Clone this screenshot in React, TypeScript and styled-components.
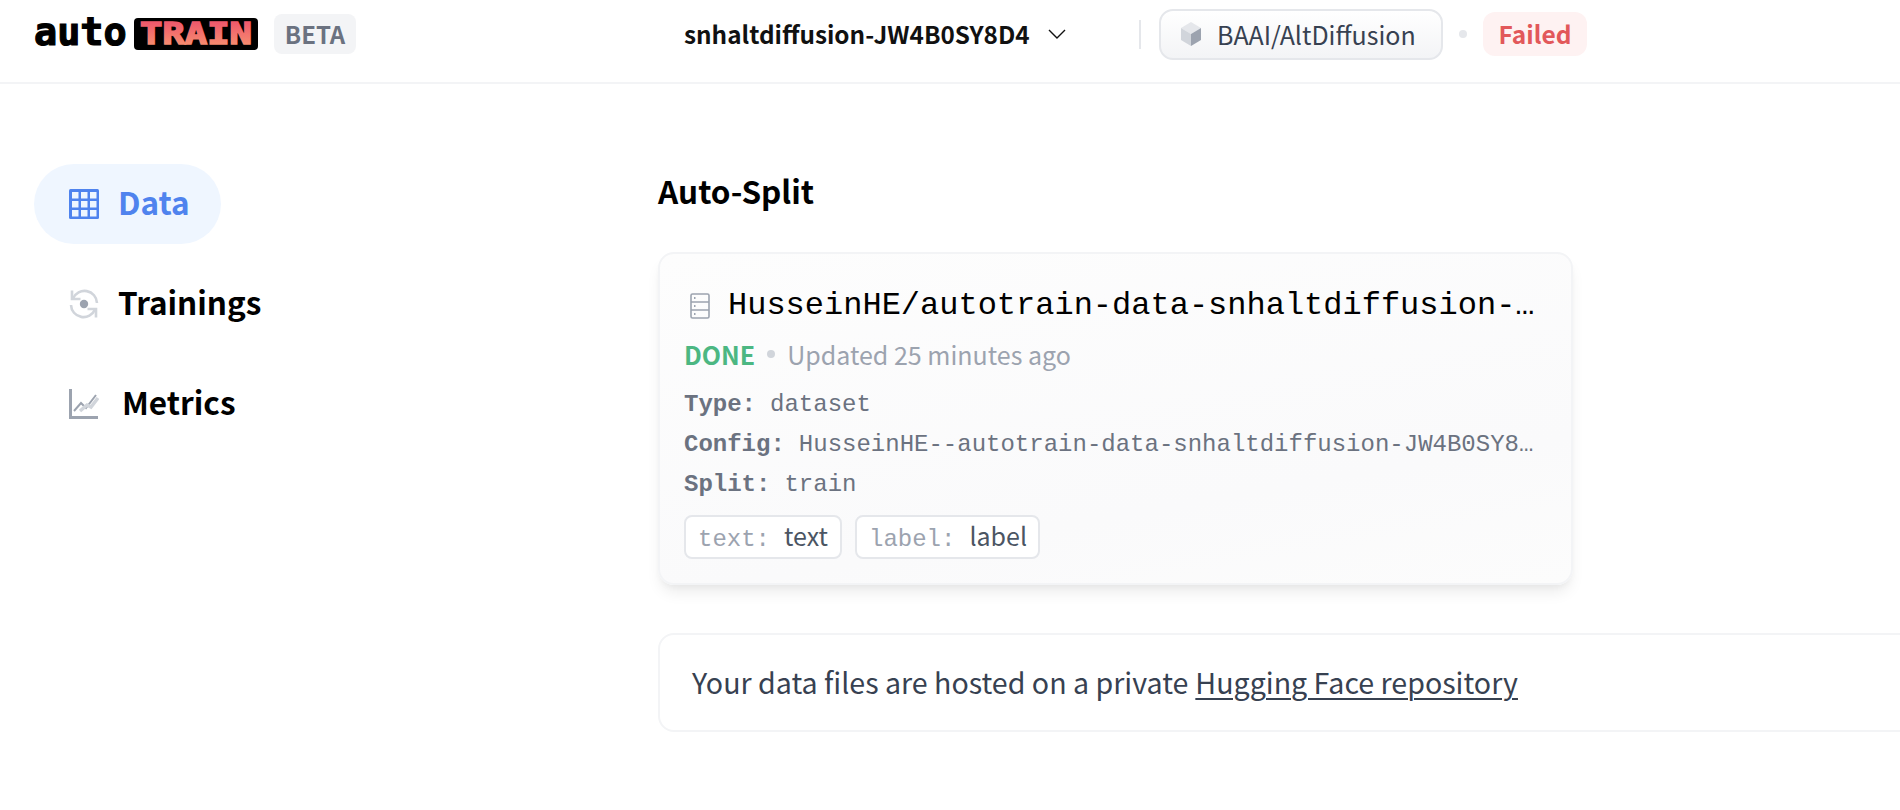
import React from "react";
import styled, { createGlobalStyle } from "styled-components";

const Global = createGlobalStyle`
  html, body { margin: 0; padding: 0; background: #fff; height: 810px; overflow: hidden; }
  body { font-family: "Noto Sans CJK SC", "Noto Sans", sans-serif; }
  * { box-sizing: border-box; }
`;
const SANS = `"Noto Sans CJK SC", "Noto Sans", sans-serif`;
const MONO = `"Liberation Mono", "DejaVu Sans Mono", monospace`;

const Header = styled.header`
  height: 84px; border-bottom: 2px solid #f3f4f6; display: flex; align-items: center; padding: 0 0 14px 34px;
`;
const Logo = styled.div`display: flex; align-items: center; width: 240px; gap: 8px;`;
const LogoAuto = styled.span`
  font-family: "DejaVu Sans Mono", monospace; font-weight: 700; font-size: 38.5px; line-height: 32px; color: #000; width: 92px; position: relative; top: -2px; -webkit-text-stroke: 1.2px #000;
`;
const LogoTrain = styled.svg`width: 124px; height: 32px; flex: none; display: block; overflow: visible;`;
const LogoTrainText = styled.text`
  font-family: "DejaVu Sans Mono", monospace; font-weight: 700; font-size: 30px;
`;
const Beta = styled.span`
  width: 82px; height: 40px; background: #f3f4f6; border-radius: 8px; color: #6b7280; font-size: 24px; font-weight: 600; display: flex; align-items: center; justify-content: center; line-height: 1;
`;
const ProjectName = styled.div`
  margin-left: 328px; font-size: 24.3px; font-weight: 600; color: #111; width: 347px; white-space: nowrap; line-height: 1;
`;
const Chevron = styled.svg`width: 18px; height: 18px; margin-left: 17px; flex: none;`;
const Divider = styled.span`width: 2px; height: 29px; background: #e5e7eb; margin-left: 73px; flex: none;`;
const ModelChip = styled.div`
  margin-left: 18px; width: 284px; height: 51px; border: 2px solid #e5e7eb; border-radius: 14px; background: linear-gradient(180deg, #fff, #f3f4f6);
  display: flex; align-items: center; padding-left: 20px; gap: 16px; font-size: 25px; color: #374151; line-height: 1;
`;
const Dot = styled.span<{ $size: number; $color: string }>`
  width: ${p => p.$size}px; height: ${p => p.$size}px; border-radius: 50%; background: ${p => p.$color}; flex: none;
`;
const HeaderDot = styled(Dot)`margin-left: 16px;`;
const Failed = styled.span`
  margin-left: 16px; width: 104px; height: 44px; background: #fef2f2; border-radius: 12px; color: #e2585a; font-size: 24.5px; font-weight: 600; display: flex; align-items: center; justify-content: center; line-height: 1;
`;
const Main = styled.main`display: flex;`;
const Sidebar = styled.nav`width: 658px; flex: none; padding: 80px 0 0 34px; display: flex; flex-direction: column; gap: 20px; align-items: flex-start;`;
const NavItem = styled.div<{ $active?: boolean; $gap?: number }>`
  height: 80px; border-radius: 40px; padding: 0 31px 0 35px; display: flex; align-items: center; gap: ${p => p.$gap ?? 19}px;
  background: ${p => (p.$active ? "#eff6ff" : "transparent")}; color: ${p => (p.$active ? "#4f83ee" : "#000")};
  font-size: 31.5px; font-weight: 600; line-height: 1;
`;
const NavLabel = styled.span`padding-bottom: 4px;`;
const NavIcon = styled.svg`width: 30px; height: 30px; flex: none;`;
const Content = styled.section`flex: none; width: 1400px; padding-top: 84px;`;
const Title = styled.h2`margin: 0; font-size: 31.5px; font-weight: 600; line-height: 44px; color: #000; height: 44px;`;
const Card = styled.article`
  margin-top: 40px; width: 915px; height: 333px; border: 2px solid #f3f4f6; border-radius: 16px; padding: 32px 27px 0 24px;
  background: linear-gradient(170deg, #fdfdfd, #fafafb 70%, #fcfcfc); box-shadow: 0 10px 15px -3px rgba(0,0,0,.08), 0 4px 6px -2px rgba(0,0,0,.04);
`;
const CardTitleRow = styled.div`display: flex; align-items: center; height: 40px; gap: 18px; padding-left: 6px;`;
const DbIcon = styled.svg`width: 20px; height: 26px; flex: none;`;
const CardTitle = styled.div`
  font-family: ${MONO}; font-size: 32px; line-height: 40px; color: #000; white-space: nowrap; overflow: hidden; text-overflow: ellipsis; min-width: 0; flex: 1;
`;
const StatusRow = styled.div`display: flex; align-items: center; margin-top: 11px; height: 34px; font-size: 25px; line-height: 1; color: #9ca3af;`;
const Done = styled.span`color: #4cb782; font-weight: 600;`;
const StatusDot = styled(Dot)`margin: 0 12px 0 12px;`;
const MetaGroup = styled.div`margin-top: 14px; display: flex; flex-direction: column;`;
const MetaRow = styled.div`
  font-family: ${MONO}; font-size: 24px; line-height: 40px; color: #6b7280; white-space: nowrap; overflow: hidden; text-overflow: ellipsis;
`;
const MetaKey = styled.b`font-weight: 700; margin-right: 14px;`;
const Tags = styled.div`display: flex; gap: 13px; margin-top: 10px;`;
const Tag = styled.div<{ $w: number }>`
  width: ${p => p.$w}px; height: 44px; background: #fff; border: 2px solid #e5e7eb; border-radius: 8px; display: flex; align-items: baseline; padding: 6px 0 0 12px; gap: 14px; white-space: nowrap;
`;
const TagKey = styled.span`font-family: ${MONO}; font-size: 24px; color: #9ca3af;`;
const TagValue = styled.span`font-family: ${SANS}; font-size: 25px; color: #4b5563; line-height: 1;`;
const Notice = styled.div`
  margin-top: 48px; height: 99px; width: 1300px; border: 2px solid #f3f4f6; border-radius: 16px; display: flex; align-items: center; padding-left: 32px; font-size: 28.6px; color: #374151; gap: 7px; line-height: 1;
`;
const NoticeLink = styled.a`color: #374151; text-decoration: underline; text-underline-offset: 4px; text-decoration-thickness: 2px;`;

export default function App() {
  return (
    <>
      <Global />
      <Header>
        <Logo>
          <LogoAuto>auto</LogoAuto>
          <LogoTrain viewBox="0 0 124 32">
            <defs>
              <linearGradient id="train" gradientUnits="userSpaceOnUse" x1="0" y1="5" x2="0" y2="27">
                <stop offset="0" stopColor="#ee5a6c" />
                <stop offset="1" stopColor="#f68c6f" />
              </linearGradient>
            </defs>
            <rect width="124" height="32" rx="4" fill="#000" />
            <LogoTrainText x="6" y="26" textLength="112" lengthAdjust="spacingAndGlyphs" fill="url(#train)" stroke="url(#train)" strokeWidth="1.6">TRAIN</LogoTrainText>
          </LogoTrain>
        </Logo>
        <Beta>BETA</Beta>
        <ProjectName>snhaltdiffusion-JW4B0SY8D4</ProjectName>
        <Chevron viewBox="0 0 18 18" fill="none" stroke="#111" strokeWidth="1.4"><path d="M1 5l8 8 8-8" /></Chevron>
        <Divider />
        <ModelChip>
          <svg width="20" height="24" viewBox="0 0 20 24" style={{ flex: "none" }}>
            <path d="M10 0l10 6-10 6L0 6z" fill="#e5e7eb" />
            <path d="M0 6l10 6v12L0 18z" fill="#d1d5db" />
            <path d="M20 6L10 12v12l10-6z" fill="#9ca3af" />
          </svg>
          BAAI/AltDiffusion
        </ModelChip>
        <HeaderDot $size={8} $color="#e5e7eb" />
        <Failed>Failed</Failed>
      </Header>
      <Main>
        <Sidebar>
          <NavItem $active>
            <NavIcon viewBox="0 0 30 30">
              <rect width="30" height="30" rx="1.5" fill="#4f83ee" />
              {[3, 12, 21].flatMap(x => [3, 12, 21].map(y => <rect key={`${x}-${y}`} x={x} y={y} width="6.5" height="6.5" fill="#eff6ff" />))}
            </NavIcon>
            <NavLabel>Data</NavLabel>
          </NavItem>
          <NavItem>
            <NavIcon viewBox="0 0 30 30" fill="none" stroke="#d1d5db" strokeWidth="2.6">
              <path d="M4 9.5A12.5 12.5 0 0 1 28 14" />
              <path d="M26 20.5A12.5 12.5 0 0 1 2 16" />
              <path d="M3 1.5v8.5h8.5" />
              <path d="M27 28.5V20h-8.5" />
              <circle cx="15" cy="15" r="4.2" fill="#9ca3af" stroke="none" />
            </NavIcon>
            <NavLabel>Trainings</NavLabel>
          </NavItem>
          <NavItem $gap={23}>
            <NavIcon viewBox="0 0 30 30" fill="none">
              <path d="M1.5 0v28.5H29" stroke="#9ca3af" strokeWidth="3" />
              <path d="M5 22l7-8 5 5L27 6" stroke="#9ca3af" strokeWidth="2" />
              <path d="M11 22l7-6 4 2 7-9" stroke="#d1d5db" strokeWidth="3.5" />
            </NavIcon>
            <NavLabel>Metrics</NavLabel>
          </NavItem>
        </Sidebar>
        <Content>
          <Title>Auto-Split</Title>
          <Card>
            <CardTitleRow>
              <DbIcon viewBox="0 0 20 26" fill="none" stroke="#9ca3af" strokeWidth="1.6">
                <rect x="1" y="1" width="18" height="24" rx="1.5" />
                <path d="M1 9h18M1 17h18" />
                <path d="M4 5h1.5M4 13h1.5M4 21h1.5" strokeWidth="1.8" />
              </DbIcon>
              <CardTitle>HusseinHE/autotrain-data-snhaltdiffusion-JW4B0SY8D4</CardTitle>
            </CardTitleRow>
            <StatusRow>
              <Done>DONE</Done>
              <StatusDot $size={8} $color="#d1d5db" />
              Updated 25 minutes ago
            </StatusRow>
            <MetaGroup>
              <MetaRow><MetaKey>Type:</MetaKey>dataset</MetaRow>
              <MetaRow><MetaKey>Config:</MetaKey>HusseinHE--autotrain-data-snhaltdiffusion-JW4B0SY8D4</MetaRow>
              <MetaRow><MetaKey>Split:</MetaKey>train</MetaRow>
            </MetaGroup>
            <Tags>
              <Tag $w={158}><TagKey>text:</TagKey><TagValue>text</TagValue></Tag>
              <Tag $w={185}><TagKey>label:</TagKey><TagValue>label</TagValue></Tag>
            </Tags>
          </Card>
          <Notice>
            <span>Your data files are hosted on a private</span>
            <NoticeLink>Hugging Face repository</NoticeLink>
          </Notice>
        </Content>
      </Main>
    </>
  );
}
